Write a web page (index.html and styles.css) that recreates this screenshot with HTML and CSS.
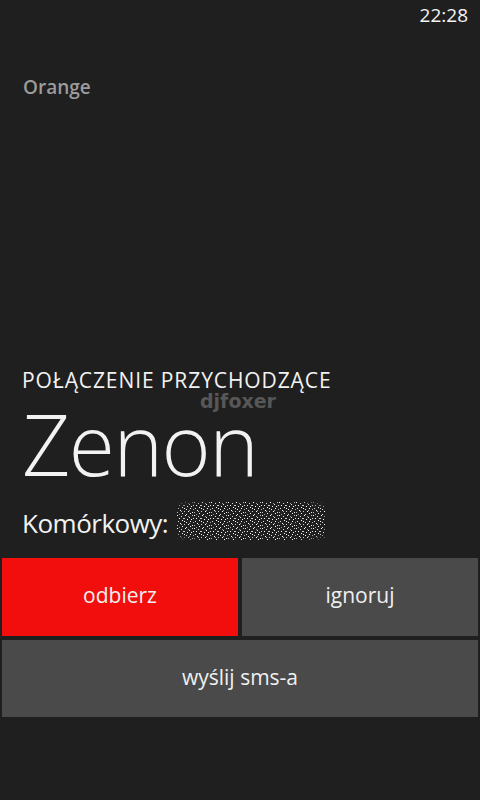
FILE: index.html
```html
<!DOCTYPE html>
<html lang="pl">
<head>
<meta charset="utf-8">
<title>Połączenie przychodzące</title>
<link rel="stylesheet" href="styles.css">
</head>
<body>
<div class="screen">
  <div class="status"><span class="time">22:28</span></div>
  <div class="operator">Orange</div>
  <div class="spacer"></div>
  <div class="info">
    <div class="label">POŁĄCZENIE PRZYCHODZĄCE</div>
    <div class="watermark">djfoxer</div>
    <div class="name">Zenon</div>
    <div class="number">
      <span class="kind">Komórkowy:</span>
      <svg class="noise" width="148" height="38" viewBox="0 0 148 38">
        <defs>
          <pattern id="n" width="17" height="13" patternUnits="userSpaceOnUse">
            <rect x="0" y="0" width="1" height="1" fill="#fff"/>
            <rect x="4" y="1" width="1" height="1" fill="#ddd"/>
            <rect x="8" y="0" width="1" height="1" fill="#fff"/>
            <rect x="12" y="2" width="1" height="1" fill="#eee"/>
            <rect x="15" y="0" width="1" height="1" fill="#bbb"/>
            <rect x="2" y="3" width="1" height="1" fill="#fff"/>
            <rect x="6" y="3" width="2" height="1" fill="#ccc"/>
            <rect x="10" y="4" width="1" height="1" fill="#fff"/>
            <rect x="14" y="4" width="1" height="1" fill="#fff"/>
            <rect x="1" y="6" width="1" height="1" fill="#ddd"/>
            <rect x="5" y="5" width="1" height="1" fill="#fff"/>
            <rect x="9" y="7" width="1" height="1" fill="#eee"/>
            <rect x="13" y="6" width="1" height="1" fill="#fff"/>
            <rect x="16" y="7" width="1" height="1" fill="#aaa"/>
            <rect x="3" y="8" width="1" height="1" fill="#fff"/>
            <rect x="7" y="9" width="1" height="1" fill="#ccc"/>
            <rect x="11" y="9" width="1" height="1" fill="#fff"/>
            <rect x="15" y="10" width="1" height="1" fill="#eee"/>
            <rect x="0" y="10" width="1" height="1" fill="#bbb"/>
            <rect x="5" y="11" width="1" height="1" fill="#fff"/>
            <rect x="9" y="12" width="1" height="1" fill="#ddd"/>
            <rect x="13" y="11" width="1" height="1" fill="#fff"/>
            <rect x="2" y="12" width="1" height="1" fill="#999"/>
            <rect x="11" y="1" width="1" height="1" fill="#999"/>
            <rect x="7" y="6" width="1" height="1" fill="#fff"/>
            <rect x="12" y="8" width="1" height="1" fill="#aaa"/>
            <rect x="16" y="3" width="1" height="1" fill="#ddd"/>
            <rect x="4" y="9" width="1" height="1" fill="#aaa"/>
          </pattern>
          <radialGradient id="g" cx="0.5" cy="0.5" r="0.7">
            <stop offset="0.8" stop-color="#fff"/>
            <stop offset="1" stop-color="#000"/>
          </radialGradient>
          <mask id="m"><rect width="148" height="38" fill="url(#g)"/></mask>
        </defs>
        <rect width="148" height="38" fill="url(#n)" mask="url(#m)"/>
      </svg>
    </div>
  </div>
  <div class="actions">
    <div class="row">
      <button class="btn answer">odbierz</button>
      <button class="btn">ignoruj</button>
    </div>
    <button class="btn wide">wyślij sms-a</button>
  </div>
</div>
</body>
</html>
```
FILE: styles.css
```css
* { box-sizing: border-box; }
html, body { margin: 0; padding: 0; background: #1f1f1f; }
body {
  font-family: "Open Sans", "Noto Sans", sans-serif;
  color: #f2f2f2;
  width: 480px;
  height: 800px;
  overflow: hidden;
}
.screen {
  display: flex;
  flex-direction: column;
  height: 800px;
}
.status {
  display: flex;
  justify-content: flex-end;
  padding: 2px 12px 0 0;
  height: 30px;
}
.time {
  font-size: 19px;
  line-height: 26px;
  color: #f4f4f4;
}
.operator {
  padding: 44px 0 0 23px;
  font-size: 19px;
  line-height: 26px;
  color: #9c9c9c;
  font-weight: 600;
}
.spacer { flex: 1; }
.info {
  padding-left: 22px;
  position: relative;
}
.label {
  font-size: 21px;
  font-weight: 500;
  line-height: 24px;
  letter-spacing: 0.9px;
}
.watermark {
  position: absolute;
  left: 200px;
  top: 24px;
  font-family: "DejaVu Sans", sans-serif;
  font-weight: bold;
  font-size: 19px;
  line-height: 18px;
  color: #575757;
}
.name {
  margin-top: 20px;
  font-size: 84px;
  font-weight: 300;
  line-height: 64px;
  letter-spacing: -1.5px;
}
.number {
  display: flex;
  align-items: center;
  gap: 9px;
  margin-top: 27px;
  height: 40px;
}
.kind {
  font-size: 26px;
  line-height: 40px;
  letter-spacing: -0.5px;
}
.noise { display: block; margin-top: -4px; }
.actions {
  display: flex;
  flex-direction: column;
  gap: 4px;
  padding: 15px 2px 83px;
}
.row {
  display: flex;
  gap: 4px;
}
.btn {
  flex: 1;
  border: 0;
  margin: 0;
  height: 78px;
  background: #4a4a4a;
  color: #f0f0f0;
  font-family: "Open Sans", "Noto Sans", sans-serif;
  font-size: 21px;
  padding: 0 0 4px;
}
.answer { background: #f30e0e; }
.wide { height: 77px; flex: none; width: 100%; }
```
